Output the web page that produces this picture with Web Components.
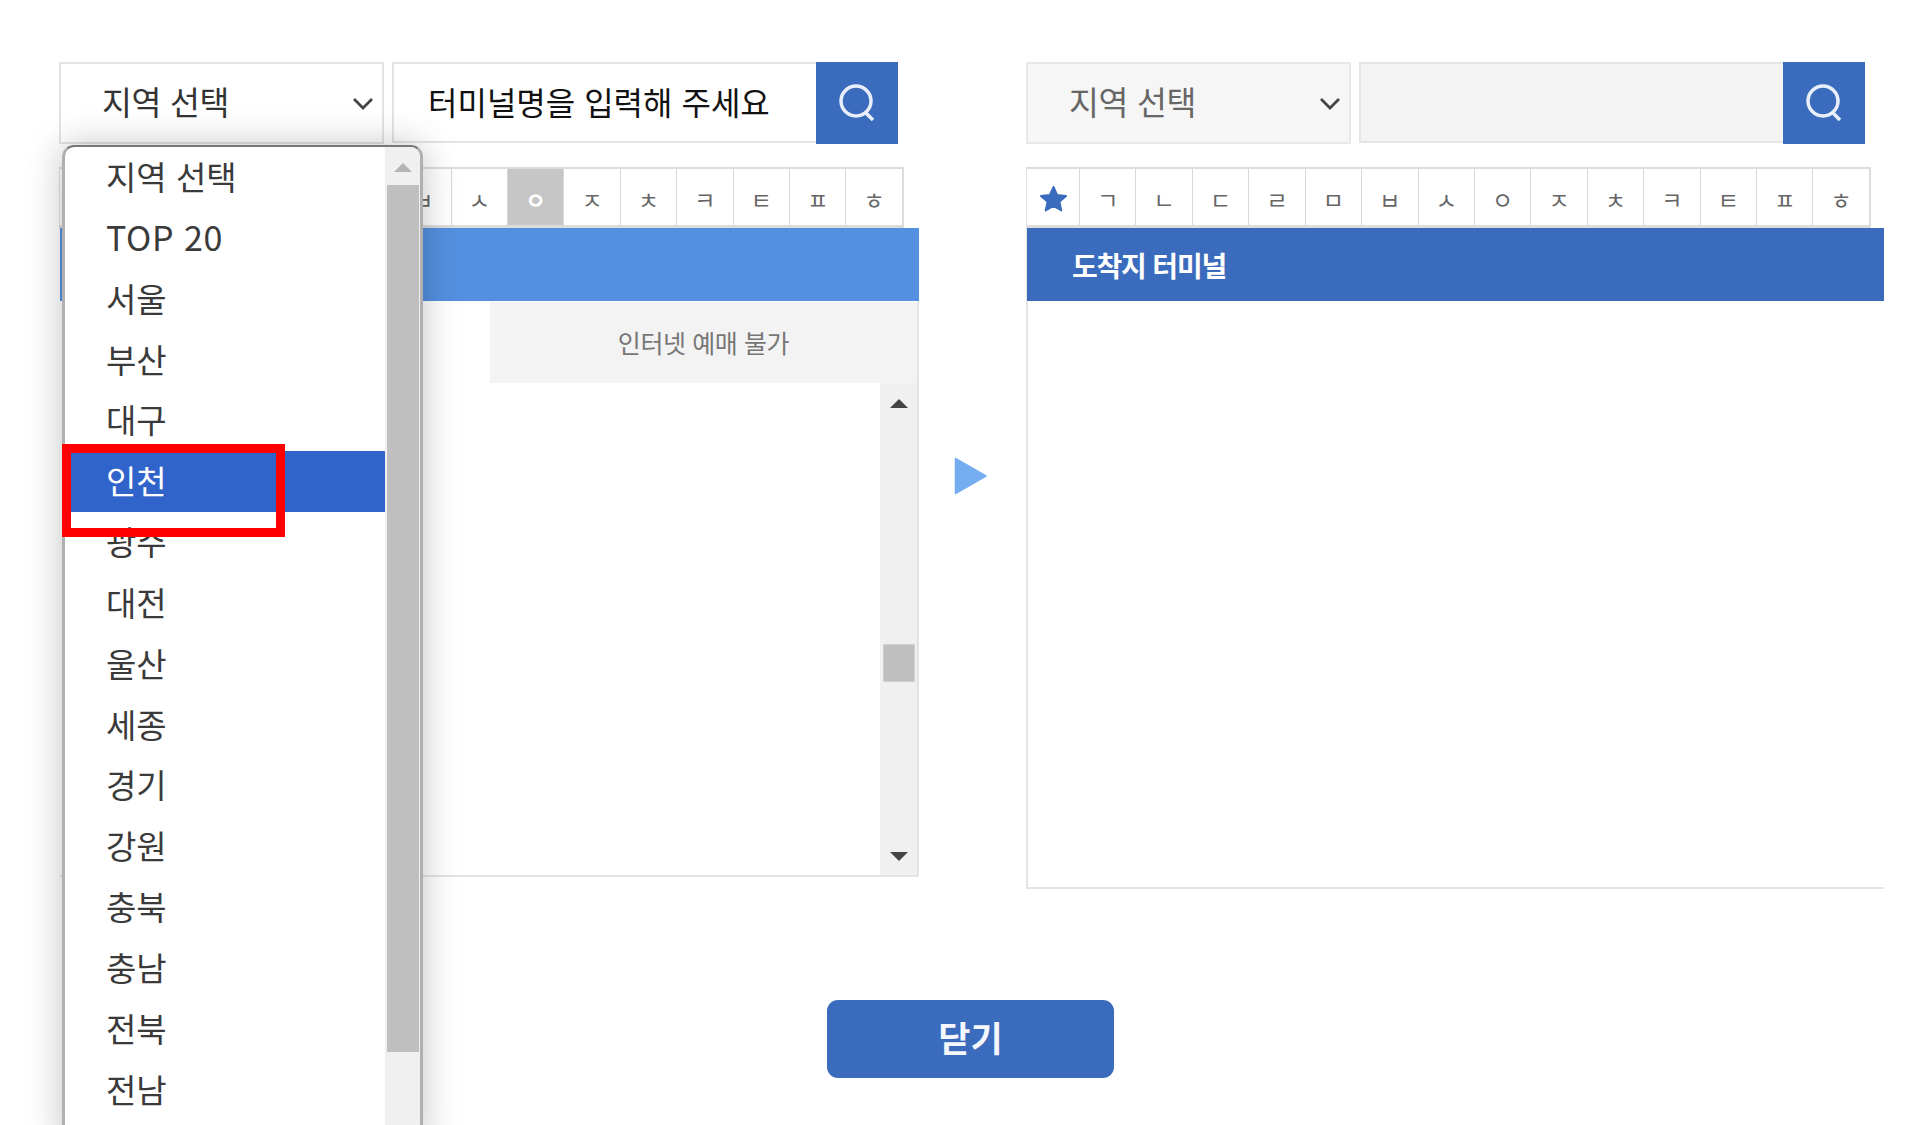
<!DOCTYPE html>
<html lang="ko">
<head>
<meta charset="utf-8">
<title>터미널 선택</title>
<style>
  html, body { margin: 0; padding: 0; background: #fff; overflow: hidden; }
  body { font-family: "Noto Sans CJK KR", "Noto Sans", sans-serif; }
</style>
</head>
<body>
<terminal-page></terminal-page>

<script>
  const CHEVRON = `<svg width="22" height="13" viewBox="0 0 22 13"><path d="M2 2l9 9 9-9" fill="none" stroke="#444" stroke-width="2.800"/></svg>`;

  class RegionSelect extends HTMLElement {
    constructor() {
      super();
      this.attachShadow({ mode: "open" });
      this.shadowRoot.innerHTML = `
        <style>
          :host {
            display: flex;
            align-items: center;
            justify-content: space-between;
            box-sizing: border-box;
            width: 325px;
            height: 82px;
            padding: 0 8px 6px 41px;
            background: #fff;
            border: 2px solid #e4e4e4;
            color: #333;
            font-size: 32.500px;
            letter-spacing: -0.3px;
          }
          :host([disabled]) { background: #f6f6f6; color: #666; border-color: #e8e8e8; }
          svg { margin-top: 6px; }
        </style>
        <span><slot></slot></span>
        ${CHEVRON}
      `;
    }
  }
  customElements.define("region-select", RegionSelect);

  class TerminalSearch extends HTMLElement {
    constructor() {
      super();
      this.attachShadow({ mode: "open" });
      this.shadowRoot.innerHTML = `
        <style>
          :host {
            display: flex;
            width: 506px;
            height: 82px;
          }
          .field {
            flex: 1;
            display: flex;
            align-items: center;
            box-sizing: border-box;
            height: 81px;
            padding: 0 0 4px 34px;
            background: #fff;
            border: 2px solid #e4e4e4;
            border-right: 0;
            color: #111;
            font-size: 32px;
          }
          :host([disabled]) .field { background: #f3f3f3; }
          .btn {
            width: 82px;
            display: flex;
            align-items: center;
            justify-content: center;
            background: #3b6bbd;
          }
        </style>
        <div class="field"><slot></slot></div>
        <div class="btn">
          <svg width="40" height="40" viewBox="0 0 40 40">
            <circle cx="19" cy="18" r="15" fill="none" stroke="#e8effa" stroke-width="3.500"/>
            <path d="M28 29l8 8" stroke="#e8effa" stroke-width="3.500" fill="none"/>
          </svg>
        </div>
      `;
    }
  }
  customElements.define("terminal-search", TerminalSearch);

  class ConsonantTabs extends HTMLElement {
    constructor() {
      super();
      this.attachShadow({ mode: "open" });
      const active = this.getAttribute("active");
      // letters before this one sit under the open dropdown, so they stay empty
      const letters = "ㄱㄴㄷㄹㅁㅂㅅㅇㅈㅊㅋㅌㅍㅎ".split("");
      const firstShown = letters.indexOf(this.getAttribute("first-shown"));
      const cells = letters
        .map((c, i) => `<div class="cell${c === active ? " on" : ""}">${i < firstShown ? "" : c}</div>`)
        .join("");
      this.shadowRoot.innerHTML = `
        <style>
          :host {
            display: flex;
            box-sizing: border-box;
            width: 845px;
            height: 61px;
            border: 2px solid #dcdcdc;
            border-bottom-width: 3px;
            border-left: 1px solid #e4e4e4;
            background: #fff;
          }
          :host([first-shown]) { margin-left: -1px; }
          .star {
            width: 53px;
            flex: none;
            display: flex;
            align-items: center;
            justify-content: center;
            padding-top: 3px;
            box-sizing: border-box;
            border-right: 1px solid #d8d8d8;
          }
          .cell {
            flex: 1;
            display: flex;
            align-items: center;
            justify-content: center;
            padding-top: 3px;
            box-sizing: border-box;
            border-right: 1px solid #d8d8d8;
            color: #666;
            font-size: 23px;
          }
          .cell:last-child { border-right: 0; }
          .on { background: #c6c6c6; color: #fff; font-weight: 700; }
        </style>
        <div class="star">
          <svg width="29" height="27" viewBox="0 0 29 27">
            <path d="M14.5 2l3.6 8 8.9.9-6.6 5.9 1.9 8.6-7.8-4.4-7.8 4.4 1.9-8.6L2 10.900l8.900-.9z" fill="#3b6bbd" stroke="#3b6bbd" stroke-width="2" stroke-linejoin="round"/>
          </svg>
        </div>
        ${cells}
      `;
    }
  }
  customElements.define("consonant-tabs", ConsonantTabs);

  class PanelScrollbar extends HTMLElement {
    constructor() {
      super();
      this.attachShadow({ mode: "open" });
      this.shadowRoot.innerHTML = `
        <style>
          :host {
            display: flex;
            flex-direction: column;
            align-items: center;
            width: 37px;
            flex: none;
            background: #f0f0f0;
          }
          .up, .down { width: 0; height: 0; border-left: 9px solid transparent; border-right: 9px solid transparent; }
          .up { margin-top: 16px; border-bottom: 9px solid #444; }
          .thumb {
            width: 32px;
            height: 38px;
            box-sizing: border-box;
            margin-top: 236px;
            background: #bfbfbf;
            border: 1px solid #d0d0d0;
          }
          .down { margin-top: 170px; border-top: 9px solid #444; }
        </style>
        <div class="up"></div>
        <div class="thumb"></div>
        <div class="down"></div>
      `;
    }
  }
  customElements.define("panel-scrollbar", PanelScrollbar);

  class DeparturePanel extends HTMLElement {
    constructor() {
      super();
      this.attachShadow({ mode: "open" });
      this.shadowRoot.innerHTML = `
        <style>
          :host {
            display: flex;
            flex-direction: column;
            width: 859px;
            box-sizing: border-box;
            height: 649px;
            border-bottom: 2px solid #e4e4e4;
            border-right: 2px solid #e4e4e4;
          }
          .head { height: 73px; background: #5490e0; margin-right: -2px; flex: none; }
          .sub { display: flex; height: 82px; flex: none; padding-top: 1px; box-sizing: border-box; }
          .sub .gap { width: 430px; background: #fff; }
          .sub .label {
            flex: 1;
            display: flex;
            align-items: center;
            justify-content: center;
            box-sizing: border-box;
            padding-bottom: 2px;
            background: #f3f3f3;
            color: #777;
            font-size: 25px;
            letter-spacing: -0.4px;
          }
          .body { flex: 1; display: flex; justify-content: flex-end; }
        </style>
        <div class="head"></div>
        <div class="sub"><div class="gap"></div><div class="label"><slot></slot></div></div>
        <div class="body"><panel-scrollbar></panel-scrollbar></div>
      `;
    }
  }
  customElements.define("departure-panel", DeparturePanel);

  class ArrivalPanel extends HTMLElement {
    constructor() {
      super();
      this.attachShadow({ mode: "open" });
      this.shadowRoot.innerHTML = `
        <style>
          :host {
            display: block;
            width: 858px;
            box-sizing: border-box;
            height: 661px;
            border-left: 2px solid #e4e4e4;
            border-bottom: 2px solid #e4e4e4;
          }
          .head {
            display: flex;
            align-items: center;
            height: 73px;
            margin-left: -1px;
            padding-left: 45px;
            background: #3b6bbd;
            color: #fff;
            font-size: 28px;
            font-weight: 700;
            letter-spacing: -1.2px;
          }
        </style>
        <div class="head"><slot></slot></div>
      `;
    }
  }
  customElements.define("arrival-panel", ArrivalPanel);

  class RegionDropdown extends HTMLElement {
    constructor() {
      super();
      this.attachShadow({ mode: "open" });
      const regions = ["지역 선택", "TOP 20", "서울", "부산", "대구", "인천", "광주", "대전", "울산", "세종", "경기", "강원", "충북", "충남", "전북", "전남"];
      const rows = regions
        .map((r) => {
          let cls = "row";
          if (r === this.getAttribute("selected")) cls += " sel";
          if (r === "TOP 20") cls += " latin";
          return `<div class="${cls}">${r}</div>`;
        })
        .join("");
      this.shadowRoot.innerHTML = `
        <style>
          :host {
            position: absolute;
            left: 62px;
            top: 145px;
            width: 361px;
            height: 1000px;
            box-sizing: border-box;
            display: flex;
            background: #fff;
            border: 3px solid #b0b0b0;
            border-top-width: 2px;
            border-top-color: #777;
            border-radius: 12px 12px 0 0;
            box-shadow: 0 0 36px rgba(0, 0, 0, 0.24);
            overflow: hidden;
            color: #3a3a3a;
            font-size: 33px;
          }
          .list { flex: 1; }
          .row {
            height: 60.850px;
            line-height: 58px;
            padding-left: 41px;
            box-sizing: border-box;
          }
          .latin { font-size: 34px; letter-spacing: 0.6px; }
          .sel { background: #3164cb; color: #fff; }
          .bar {
            width: 35px;
            flex: none;
            display: flex;
            flex-direction: column;
            align-items: center;
            background: #f0f0f0;
          }
          .up {
            width: 0;
            height: 0;
            margin-top: 16px;
            border-left: 9px solid transparent;
            border-right: 9px solid transparent;
            border-bottom: 9px solid #b4b4b4;
          }
          .thumb { width: 32px; height: 867px; margin-top: 13px; background: #bfbfbf; }
        </style>
        <div class="list">${rows}</div>
        <div class="bar"><div class="up"></div><div class="thumb"></div></div>
      `;
    }
  }
  customElements.define("region-dropdown", RegionDropdown);

  class CloseButton extends HTMLElement {
    constructor() {
      super();
      this.attachShadow({ mode: "open" });
      this.shadowRoot.innerHTML = `
        <style>
          :host {
            display: flex;
            align-items: center;
            justify-content: center;
            width: 287px;
            height: 78px;
            padding-bottom: 5px;
            box-sizing: border-box;
            background: #3b6bbd;
            border-radius: 11px;
            color: #f4f7fc;
            font-size: 35px;
            font-weight: 700;
          }
        </style>
        <slot></slot>
      `;
    }
  }
  customElements.define("close-button", CloseButton);

  class TerminalPage extends HTMLElement {
    constructor() {
      super();
      this.attachShadow({ mode: "open" });
      this.shadowRoot.innerHTML = `
        <style>
          :host {
            display: block;
            position: relative;
            width: 1923px;
            height: 1125px;
            box-sizing: border-box;
            padding: 62px 39px 0 60px;
            overflow: hidden;
            background: #fff;
          }
          .columns { display: flex; height: 938px; }
          .col { display: flex; flex-direction: column; }
          .top { display: flex; gap: 8px; margin-bottom: 23px; }
          .top.shift { margin-left: -1px; }
          .arrow {
            width: 107px;
            flex: none;
            display: flex;
            justify-content: center;
            padding: 395px 4px 0 0;
            box-sizing: border-box;
          }
          .foot { display: flex; justify-content: center; padding-right: 3px; }
          .mark {
            position: absolute;
            left: 62px;
            top: 444px;
            width: 223px;
            height: 93px;
            box-sizing: border-box;
            border: 9px solid #ff0000;
          }
        </style>
        <div class="columns">
          <div class="col">
            <div class="top shift">
              <region-select>지역 선택</region-select>
              <terminal-search>터미널명을 입력해 주세요</terminal-search>
            </div>
            <consonant-tabs active="ㅇ" first-shown="ㅂ"></consonant-tabs>
            <departure-panel>인터넷 예매 불가</departure-panel>
          </div>
          <div class="arrow">
            <svg width="34" height="38" viewBox="0 0 34 38"><path d="M1.500 1.500L32 19 1.500 36.500z" fill="#75aef0" stroke="#75aef0" stroke-width="1.500" stroke-linejoin="round"/></svg>
          </div>
          <div class="col">
            <div class="top">
              <region-select disabled>지역 선택</region-select>
              <terminal-search disabled></terminal-search>
            </div>
            <consonant-tabs></consonant-tabs>
            <arrival-panel>도착지 터미널</arrival-panel>
          </div>
        </div>
        <div class="foot"><close-button>닫기</close-button></div>
        <region-dropdown selected="인천"></region-dropdown>
        <div class="mark"></div>
      `;
    }
  }
  customElements.define("terminal-page", TerminalPage);
</script>
</body>
</html>
